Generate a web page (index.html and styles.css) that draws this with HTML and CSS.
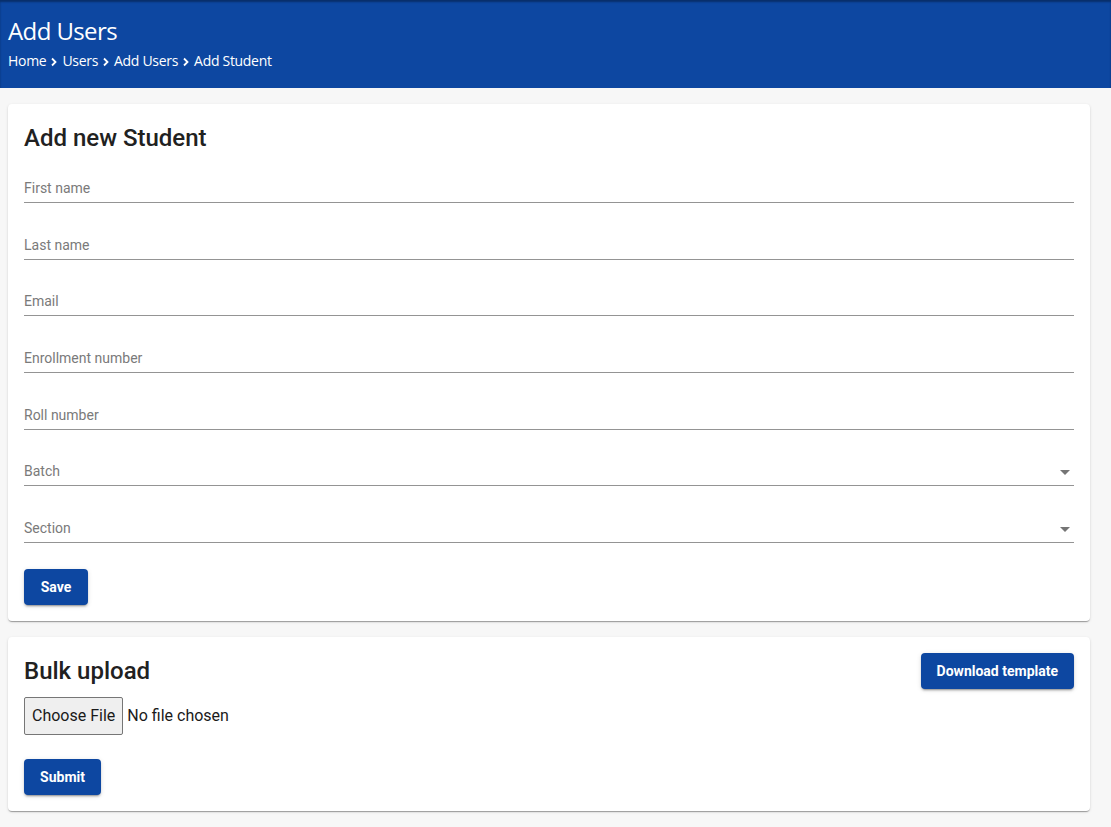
FILE: index.html
```html
<!DOCTYPE html>
<html lang="en">
<head>
<meta charset="utf-8">
<title>Add Users</title>
<link rel="stylesheet" href="styles.css">
</head>
<body>
<header class="topbar">
  <h1 class="page-title">Add Users</h1>
  <nav class="crumbs">
    <span>Home</span>
    <svg class="chev" viewBox="0 0 8 10" width="8" height="10"><path d="M2 1.5 L5.5 5 L2 8.5" fill="none" stroke="#fff" stroke-width="1.8"/></svg>
    <span>Users</span>
    <svg class="chev" viewBox="0 0 8 10" width="8" height="10"><path d="M2 1.5 L5.5 5 L2 8.5" fill="none" stroke="#fff" stroke-width="1.8"/></svg>
    <span>Add Users</span>
    <svg class="chev" viewBox="0 0 8 10" width="8" height="10"><path d="M2 1.5 L5.5 5 L2 8.5" fill="none" stroke="#fff" stroke-width="1.8"/></svg>
    <span>Add Student</span>
  </nav>
</header>
<main class="content">
  <section class="card">
    <h2 class="card-title">Add new Student</h2>
    <div class="fields">
      <div class="field"><span class="label">First name</span></div>
      <div class="field"><span class="label">Last name</span></div>
      <div class="field"><span class="label">Email</span></div>
      <div class="field"><span class="label">Enrollment number</span></div>
      <div class="field"><span class="label">Roll number</span></div>
      <div class="field select"><span class="label">Batch</span><svg class="arrow" viewBox="0 0 10 5" width="10" height="5"><path d="M0 0 L10 0 L5 5 Z" fill="#757575"/></svg></div>
      <div class="field select"><span class="label">Section</span><svg class="arrow" viewBox="0 0 10 5" width="10" height="5"><path d="M0 0 L10 0 L5 5 Z" fill="#757575"/></svg></div>
    </div>
    <button class="btn save">Save</button>
  </section>
  <section class="card">
    <div class="card-head">
      <h2 class="card-title">Bulk upload</h2>
      <button class="btn">Download template</button>
    </div>
    <div class="file-row">
      <span class="file-btn">Choose File</span>
      <span class="file-name">No file chosen</span>
    </div>
    <button class="btn submit">Submit</button>
  </section>
</main>
</body>
</html>
```
FILE: styles.css
```css
* { box-sizing: border-box; }
html, body { margin: 0; padding: 0; }
body {
  background: #f7f7f7;
  font-family: Roboto, "Liberation Sans", sans-serif;
  color: #212121;
}
.topbar {
  background: #0d47a1;
  color: #fff;
  padding: 16px 8px 17px;
  height: 88px;
  box-shadow: inset 0 2px 2px rgba(0, 0, 0, 0.35);
  font-family: "Open Sans", "Noto Sans", sans-serif;
}
.page-title {
  margin: 0;
  font-size: 24px;
  font-weight: 400;
  line-height: 30px;
  letter-spacing: -0.6px;
}
.crumbs {
  margin-top: 5px;
  display: flex;
  align-items: center;
  font-size: 14px;
  line-height: 20px;
  letter-spacing: -0.3px;
}
.chev { margin: 2px 4px 0 4px; }
.content {
  padding: 16px 21px 16px 8px;
  display: flex;
  flex-direction: column;
  gap: 16px;
}
.card {
  background: #fff;
  border-radius: 4px;
  padding: 16px;
  box-shadow: 0 2px 1px -1px rgba(0,0,0,0.2), 0 1px 1px 0 rgba(0,0,0,0.14), 0 1px 3px 0 rgba(0,0,0,0.12);
}
.card-title {
  margin: 0;
  font-size: 24px;
  font-weight: 500;
  line-height: 36px;
  color: #212121;
}
.fields {
  display: flex;
  flex-direction: column;
  gap: 16.67px;
  margin-top: 7px;
}
.field {
  height: 40px;
  border-bottom: 1px solid #949494;
  display: flex;
  align-items: flex-end;
  justify-content: space-between;
  padding-bottom: 4px;
}
.label {
  font-size: 14px;
  line-height: 20px;
  color: #7a7a7a;
}
.select .arrow { margin: 0 4px 6px 0; }
.btn {
  border: none;
  background: #0d47a1;
  color: #fff;
  font-family: Roboto, "Liberation Sans", sans-serif;
  font-weight: 700;
  font-size: 14px;
  line-height: 20px;
  height: 36px;
  padding: 8px 16px;
  border-radius: 4px;
  box-shadow: 0 3px 1px -2px rgba(0,0,0,0.2), 0 2px 2px 0 rgba(0,0,0,0.14), 0 1px 5px 0 rgba(0,0,0,0.12);
  align-self: flex-start;
}
.save { margin-top: 26px; width: 64px; display: block; }
.card-head {
  display: flex;
  justify-content: space-between;
  align-items: center;
}
.file-row {
  margin-top: 8px;
  display: flex;
  align-items: center;
  font-size: 16px;
}
.file-btn {
  height: 38px;
  display: inline-flex;
  align-items: center;
  padding: 0 7px;
  background: #efefef;
  border: 1px solid #767676;
  border-radius: 2px;
  color: #1a1a1a;
}
.file-name { margin-left: 4px; color: #1a1a1a; }
.submit { margin-top: 24px; display: block; width: 77px; }
```
